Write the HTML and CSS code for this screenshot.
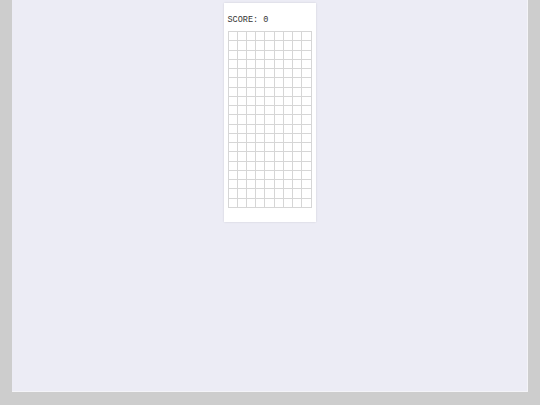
FILE: index.html
```html
<!DOCTYPE html>
<html lang="en">
<head>
  <meta charset="UTF-8">
  <title>Tetris</title>
  <link rel="stylesheet" href="styles.css">
</head>
<body>

  <div class="screen">
    <div class="game">
      <div class="score">SCORE: <span id="score">0</span></div>
      <div class="board" id="board"></div>
    </div>
  </div>

<script>
  const cols = 9;
  const rows = 19;
  const board = document.getElementById("board");

  for (let i = 0; i < cols * rows; i++) {
    const cell = document.createElement("div");
    cell.className = "cell";
    board.appendChild(cell);
  }
</script>

</body>
</html>
```

FILE: styles.css
```css
body {
  margin: 0;
  padding: 0;
  background: #cdcdcd;
  font-family: "Liberation Mono", monospace;
}

.screen {
  margin: 0 12px;
  height: 392px;
  background: #ececf5;
  border-right: 1px solid #f4f4f8;
  border-bottom: 1px solid #f4f4f8;
  box-sizing: border-box;
  padding-top: 3px;
}

.game {
  width: 92px;
  height: 219px;
  margin: 0 auto;
  background: #fff;
  box-shadow: 0 0 2px rgba(0, 0, 0, 0.12);
  box-sizing: border-box;
  padding: 12px 4px 0 4px;
}

.score {
  font-size: 8.5px;
  line-height: 10px;
  color: #333;
  margin-bottom: 6px;
}

.board {
  display: grid;
  grid-template-columns: repeat(9, 1fr);
  grid-template-rows: repeat(19, 1fr);
  width: 84px;
  height: 177px;
  border-top: 1px solid #d6d6d6;
  border-left: 1px solid #d6d6d6;
  box-sizing: border-box;
}

.cell {
  border-right: 1px solid #d6d6d6;
  border-bottom: 1px solid #d6d6d6;
}
```
